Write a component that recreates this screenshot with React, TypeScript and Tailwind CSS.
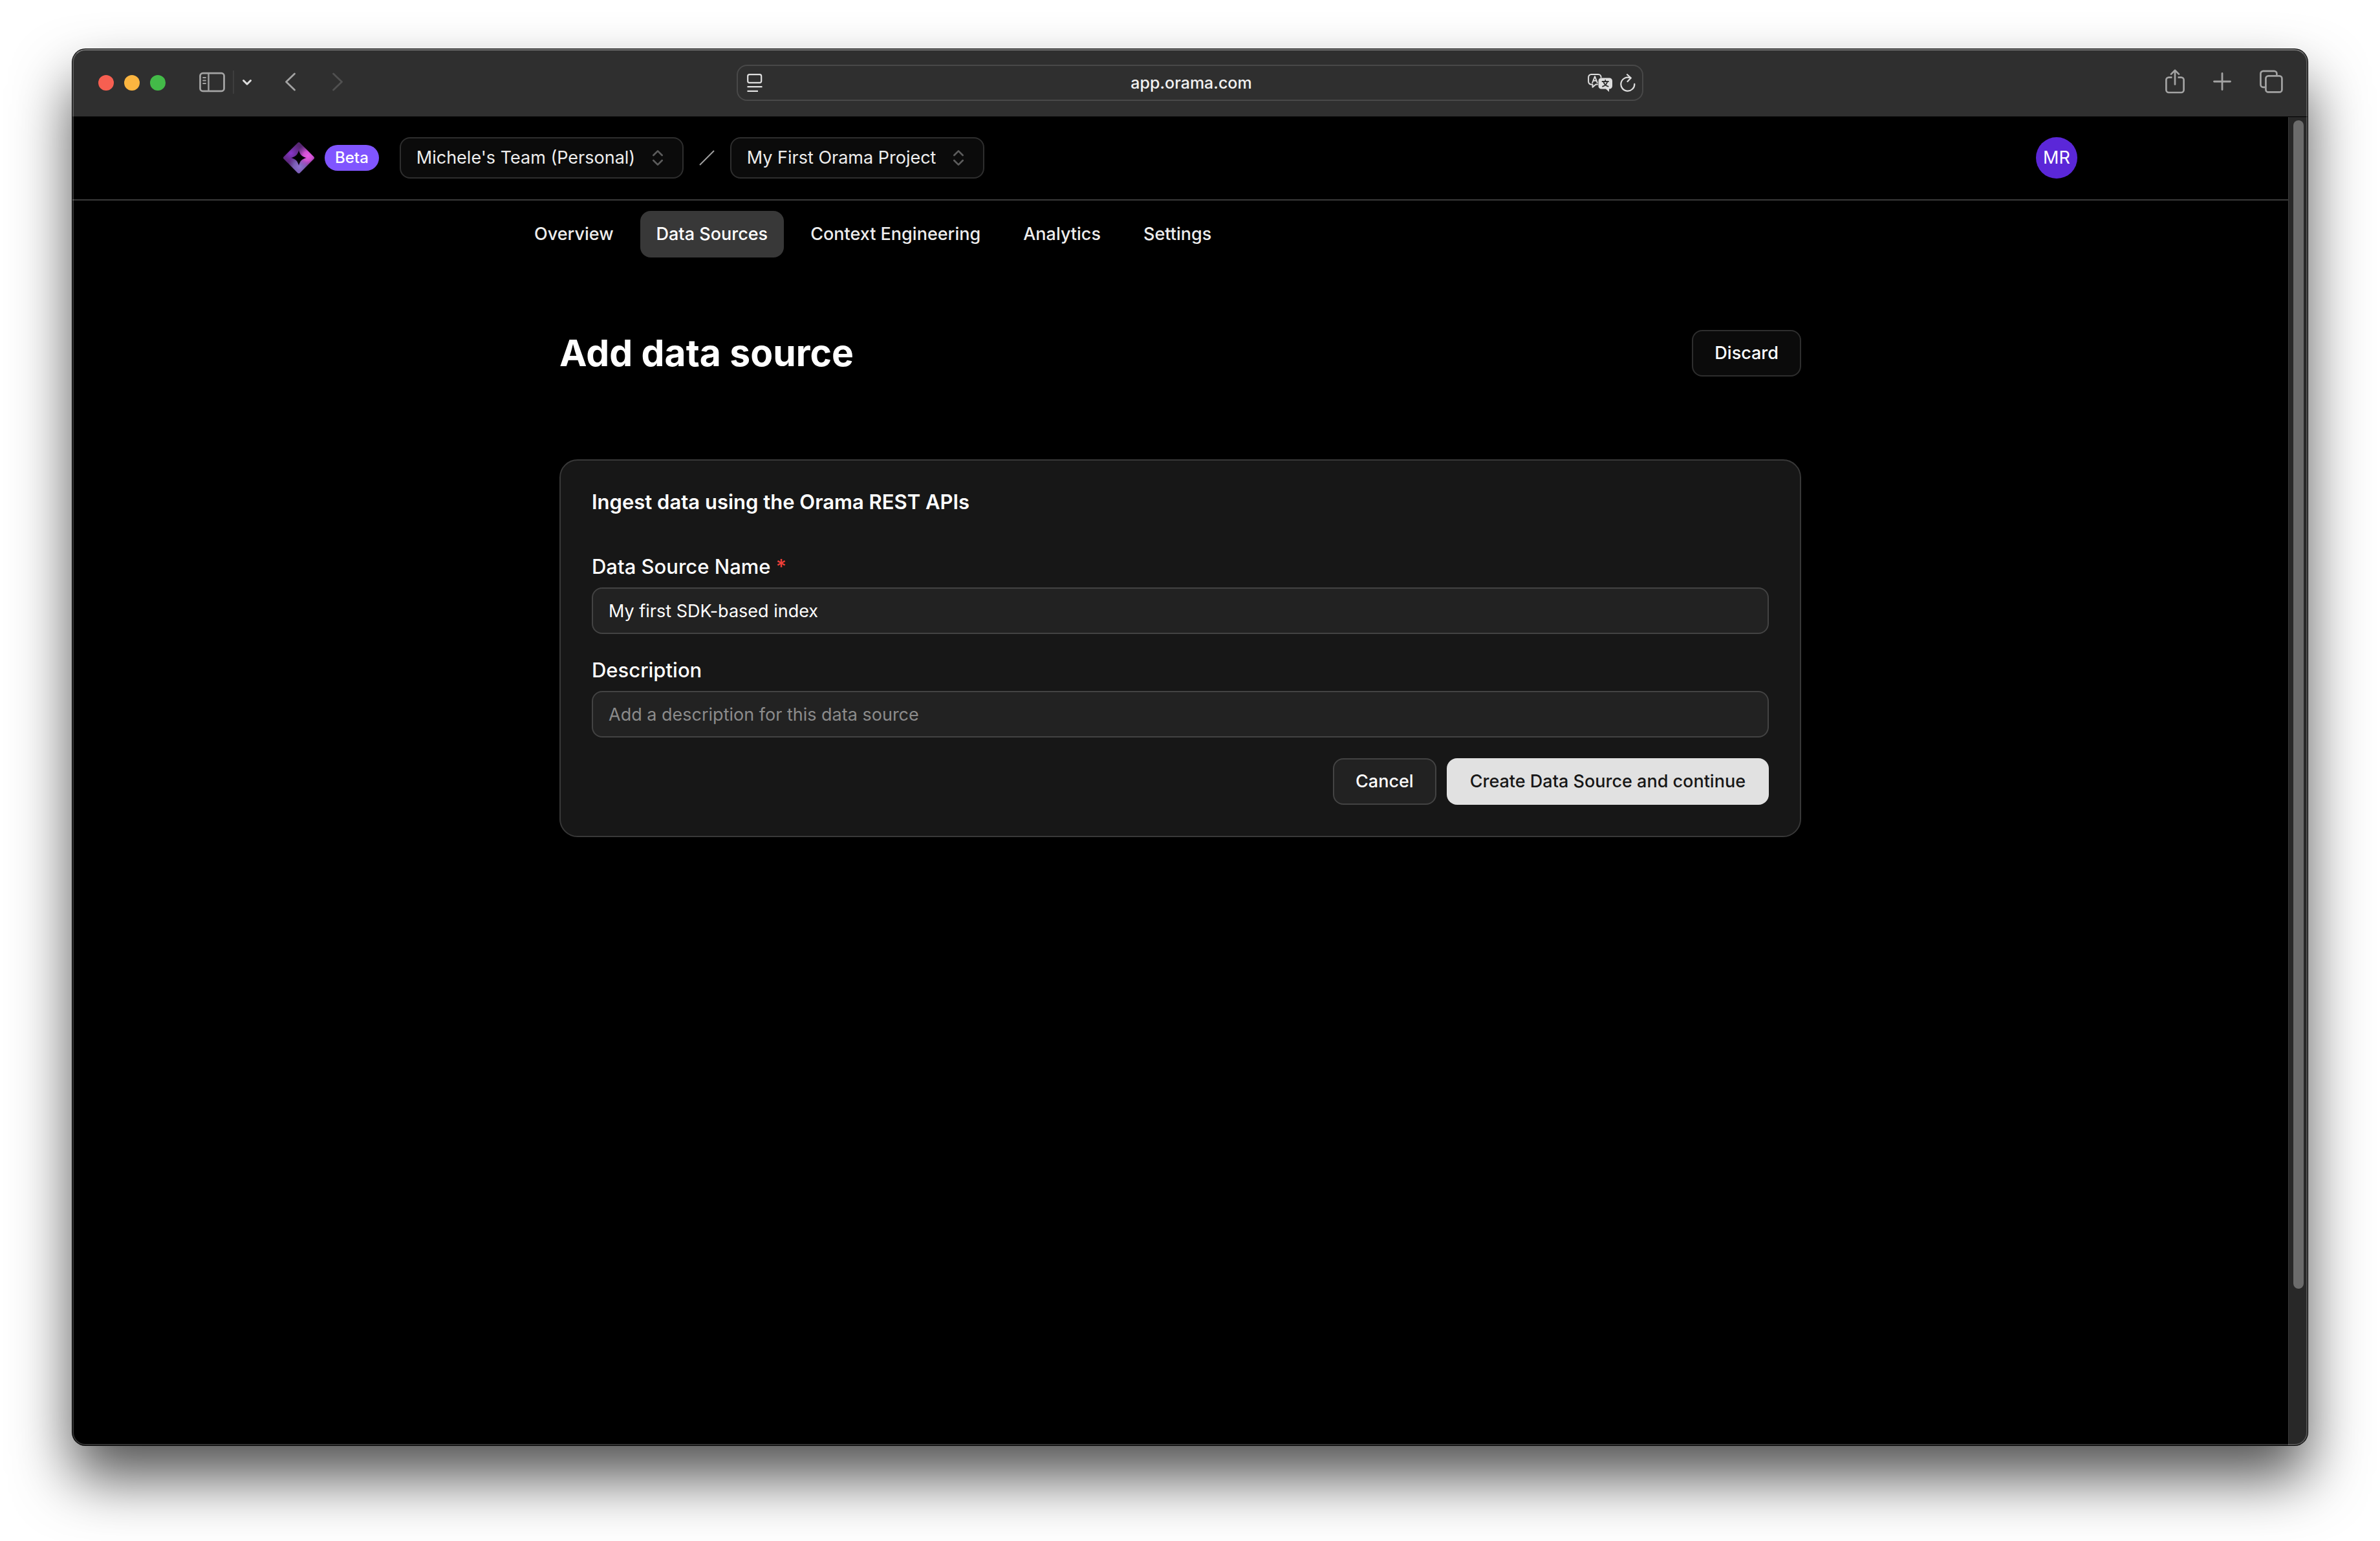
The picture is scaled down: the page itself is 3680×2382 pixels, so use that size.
import { useState, type ReactNode } from "react";
import { ChevronsUpDown } from "lucide-react";

function SidebarIcon() {
  return (
    <svg width="40" height="32" viewBox="0 0 40 32" fill="none" stroke="#a3a3a3" strokeLinecap="round">
      <rect x="1.5" y="2.2" width="37" height="27.6" rx="4" strokeWidth="2.8" />
      <path d="M14.5 2.5v27" strokeWidth="2.4" />
      <path d="M6 9h4M6 13.5h4M6 18h4" strokeWidth="1.8" />
    </svg>
  );
}

function ReaderIcon() {
  return (
    <svg width="24" height="28" viewBox="0 0 24 28" fill="none" stroke="#e0e0e0">
      <rect x="1.2" y="1.2" width="21" height="12.6" rx="2.6" strokeWidth="2.2" />
      <path d="M.5 20.2h23M.5 26.9h16.5" strokeWidth="2.2" />
    </svg>
  );
}

function TranslateIcon() {
  return (
    <svg width="38" height="28" viewBox="0 0 38 28" fill="none" strokeLinecap="round" strokeLinejoin="round">
      <path
        d="M15 16.5h-2.5L7.5 20.8v-4.3H5.5A4.4 4.4 0 0 1 1.1 12V5.4A4.4 4.4 0 0 1 5.5 1h10.7a4.4 4.4 0 0 1 4.4 4.4"
        stroke="#dedede"
        strokeWidth="2"
      />
      <path d="M7.2 13.8 11 4.2l3.8 9.6M8.5 10.8h5" stroke="#dedede" strokeWidth="1.9" />
      <path
        d="M21 6.5h12.5A4.5 4.5 0 0 1 38 11v8a4.5 4.5 0 0 1-4.5 4.5H33V28l-5-4.5h-7a4.5 4.5 0 0 1-4.5-4.5v-8A4.5 4.5 0 0 1 21 6.5Z"
        fill="#dedede"
      />
      <path
        d="M22.5 12H32M27.2 9.8V12M30.4 12c-1 4-3.7 6.5-7.4 7.7M24.2 12c1 4 3.7 6.5 7.4 7.7"
        stroke="#2f2f2f"
        strokeWidth="1.8"
      />
    </svg>
  );
}

function ReloadIcon() {
  return (
    <svg width="24" height="28" viewBox="0 0 24 28" fill="none" stroke="#dedede" strokeWidth="2.2" strokeLinecap="round" strokeLinejoin="round">
      <path d="M22.3 15.8A10.5 10.5 0 1 1 15.5 6.3" />
      <path d="m11 1.2 5.8 5.3-5.3 5.5" />
    </svg>
  );
}

function ShareIcon() {
  return (
    <svg width="30" height="38" viewBox="0 0 30 38" fill="none" stroke="#a3a3a3" strokeWidth="2.7" strokeLinecap="round" strokeLinejoin="round">
      <path
        d="M10.5 12.6H5.4a4 4 0 0 0-4 4V32a4 4 0 0 0 4 4h19.2a4 4 0 0 0 4-4V16.6a4 4 0 0 0-4-4h-5.1"
        strokeLinecap="butt"
      />
      <path d="M15 23.5V2.2M9 7.6l6-6 6 6" />
    </svg>
  );
}

function PlusIcon() {
  return (
    <svg width="28" height="28" viewBox="0 0 28 28" fill="none" stroke="#a3a3a3" strokeWidth="2.8" strokeLinecap="round">
      <path d="M14 1.5v25M1.5 14h25" />
    </svg>
  );
}

function TabsIcon() {
  return (
    <svg width="36" height="36" viewBox="0 0 36 36" fill="none" stroke="#a3a3a3" strokeWidth="2.7">
      <rect x="9.4" y="9.4" width="25" height="25" rx="4" />
      <path d="M8.5 26.8H5.4a4 4 0 0 1-4-4V5.9a4 4 0 0 1 4-4h17a4 4 0 0 1 4 4v2.6" />
    </svg>
  );
}

function OramaLogo() {
  return (
    <svg width="48" height="48" viewBox="0 0 48 48" role="img" aria-label="Orama">
      <defs>
        <clipPath id="logo-shape">
          <path
            clipRule="evenodd"
            d="M22.5.6a2.2 2.2 0 0 1 3 0L47.4 22.5a2.2 2.2 0 0 1 0 3L25.5 47.4a2.2 2.2 0 0 1-3 0L.6 25.5a2.2 2.2 0 0 1 0-3ZM24 12c-1.8 7-5 10.2-12 12 7 1.8 10.2 5 12 12 1.8-7 5-10.2 12-12-7-1.8-10.2-5-12-12Z"
          />
        </clipPath>
        <radialGradient id="logo-pink" gradientUnits="userSpaceOnUse" cx="38" cy="21" r="18">
          <stop offset="0" stopColor="#ea5ae6" />
          <stop offset=".4" stopColor="#dc55dc" stopOpacity=".9" />
          <stop offset="1" stopColor="#b048c4" stopOpacity="0" />
        </radialGradient>
        <radialGradient id="logo-violet" gradientUnits="userSpaceOnUse" cx="12" cy="17" r="17">
          <stop offset="0" stopColor="#8a35cc" />
          <stop offset="1" stopColor="#7a33b4" stopOpacity="0" />
        </radialGradient>
        <radialGradient id="logo-lilac" gradientUnits="userSpaceOnUse" cx="25" cy="38" r="18">
          <stop offset="0" stopColor="#8f72d0" />
          <stop offset=".5" stopColor="#8068c0" stopOpacity=".85" />
          <stop offset="1" stopColor="#7e66bd" stopOpacity="0" />
        </radialGradient>
      </defs>
      <g clipPath="url(#logo-shape)">
        <path d="M0 0h48v48H0z" fill="#552671" />
        <path d="M0 0h48v48H0z" fill="url(#logo-violet)" />
        <path d="M0 0h48v48H0z" fill="url(#logo-lilac)" />
        <path d="M0 0h48v48H0z" fill="url(#logo-pink)" />
      </g>
    </svg>
  );
}

function ToolbarButton({ label, children, disabled }: { label: string; children: ReactNode; disabled?: boolean }) {
  return (
    <button type="button" aria-label={label} disabled={disabled} className="flex shrink-0 items-center justify-center">
      {children}
    </button>
  );
}

function BrowserToolbar() {
  return (
    <div className="grid h-[104px] shrink-0 grid-cols-[1fr_1402px_1fr] items-center bg-[#2f2f2f]">
      <div className="flex items-center pl-10">
        <div className="flex gap-4">
          <button type="button" aria-label="Close window" className="size-6 rounded-full bg-[#f65f51]" />
          <button type="button" aria-label="Minimize window" className="size-6 rounded-full bg-[#fbb540]" />
          <button type="button" aria-label="Zoom window" className="size-6 rounded-full bg-[#43bb48]" />
        </div>
        <div className="ml-13 flex items-center pb-0.5">
          <ToolbarButton label="Show sidebar">
            <SidebarIcon />
          </ToolbarButton>
          <span className="ml-3 h-9 w-0.5 bg-[#3d3d3d]" />
          <span className="ml-3">
            <ToolbarButton label="Tab groups">
              <svg width="16" height="12" viewBox="0 0 16 12" fill="none" stroke="#dedede" strokeWidth="3" strokeLinecap="round" strokeLinejoin="round">
                <path d="M2.5 3.5 8 9l5.5-5.5" />
              </svg>
            </ToolbarButton>
          </span>
          <span className="ml-12">
            <ToolbarButton label="Back">
              <svg width="20" height="30" viewBox="0 0 20 30" fill="none" stroke="#a3a3a3" strokeWidth="2.8" strokeLinecap="round" strokeLinejoin="round">
                <path d="M17.5 2 4.5 14.5l13 12.5" />
              </svg>
            </ToolbarButton>
          </span>
          <span className="ml-14">
            <ToolbarButton label="Forward" disabled>
              <svg width="18" height="30" viewBox="0 0 18 30" fill="none" stroke="#505050" strokeWidth="2.8" strokeLinecap="round" strokeLinejoin="round">
                <path d="m1.5 2 13 12.5-13 12.5" />
              </svg>
            </ToolbarButton>
          </span>
        </div>
      </div>

      <div className="flex h-14 items-center rounded-2xl border-2 border-[#484848] pr-2.5 pl-3.5">
        <span className="flex w-20 items-center">
          <ToolbarButton label="Page menu">
            <ReaderIcon />
          </ToolbarButton>
        </span>
        <input
          aria-label="Address"
          defaultValue="app.orama.com"
          className="min-w-0 flex-1 bg-transparent text-center text-[25px] leading-8 font-medium text-[#f2f2f2] outline-none"
        />
        <span className="flex w-20 items-center justify-end gap-3">
          <ToolbarButton label="Translate page">
            <TranslateIcon />
          </ToolbarButton>
          <ToolbarButton label="Reload page">
            <ReloadIcon />
          </ToolbarButton>
        </span>
      </div>

      <div className="flex items-center justify-end gap-11 pr-9.5 pb-1">
        <ToolbarButton label="Share">
          <ShareIcon />
        </ToolbarButton>
        <ToolbarButton label="New tab">
          <PlusIcon />
        </ToolbarButton>
        <ToolbarButton label="Tab overview">
          <TabsIcon />
        </ToolbarButton>
      </div>
    </div>
  );
}

function Picker({ label, value }: { label: string; value: string }) {
  return (
    <div className="relative flex items-center">
      <select
        aria-label={label}
        defaultValue={value}
        className="h-16 appearance-none rounded-2xl border-2 border-[#2e2e2e] bg-[#0b0b0b] pr-18 pl-6 text-[27px] leading-8 text-[#ededed]"
      >
        <option>{value}</option>
      </select>
      <ChevronsUpDown size={32} className="pointer-events-none absolute right-6 text-[#5c5c5c]" />
    </div>
  );
}

const tabs = ["Overview", "Data Sources", "Context Engineering", "Analytics", "Settings"];

function AppHeader() {
  return (
    <header className="border-b-2 border-[#3a3a3a]">
      <div className="mx-auto flex h-32 max-w-[2774px] items-center">
        <OramaLogo />
        <span className="ml-4 flex h-10 items-center rounded-full bg-[#8055ff] px-4 text-2xl leading-8 font-medium text-white">
          Beta
        </span>
        <div className="ml-8 flex items-center gap-6">
          <Picker label="Team" value="Michele's Team (Personal)" />
          <svg width="24" height="24" viewBox="0 0 24 24" fill="none" stroke="#a0a0a0" strokeWidth="2">
            <path d="M23 1 1 23" />
          </svg>
          <Picker label="Project" value="My First Orama Project" />
        </div>
        <button
          type="button"
          aria-label="Account"
          className="ml-auto size-16 rounded-full bg-[#5b27d8] text-[27px] leading-8 text-white"
        >
          MR
        </button>
      </div>
    </header>
  );
}

function TextField({
  id,
  label,
  required,
  placeholder,
  value,
  onChange,
}: {
  id: string;
  label: string;
  required?: boolean;
  placeholder?: string;
  value: string;
  onChange: (value: string) => void;
}) {
  return (
    <div className="flex flex-col gap-4">
      <label htmlFor={id} className="text-[31px] leading-8 font-medium text-white">
        {label}
        {required && <span className="text-[#f0403a]"> *</span>}
      </label>
      <input
        id={id}
        required={required}
        placeholder={placeholder}
        value={value}
        onChange={(event) => onChange(event.target.value)}
        className="h-18 rounded-2xl border-2 border-[#434343] bg-[#222222] px-6 text-[27px] leading-8 text-white outline-none placeholder:text-[#8b8b8b] placeholder:opacity-100"
      />
    </div>
  );
}

export default function App() {
  const [name, setName] = useState("My first SDK-based index");
  const [description, setDescription] = useState("");

  return (
    <div className="flex min-h-screen flex-col bg-white px-28 pt-19 pb-37 font-['Inter',sans-serif]">
      <div className="relative flex flex-1 flex-col overflow-hidden rounded-[20px] bg-black shadow-[0_0_0_1px_#000,0_50px_90px_rgba(0,0,0,0.68)]">
        <BrowserToolbar />
        <div className="flex flex-1">
          <div className="min-w-0 flex-1">
            <AppHeader />
            <div className="mx-auto max-w-[2048px]">
              <nav className="flex gap-4 pt-4">
                {tabs.map((tab) => (
                  <a
                    key={tab}
                    href="#"
                    aria-current={tab === "Data Sources" ? "page" : undefined}
                    className="flex h-18 items-center rounded-2xl px-[25px] text-[27px] leading-8 font-medium text-[#ededed] aria-[current=page]:bg-[#383838] aria-[current=page]:text-white"
                  >
                    {tab}
                  </a>
                ))}
              </nav>
              <main className="px-16 pt-28">
                <div className="flex items-center justify-between">
                  <h1 className="text-[57px] leading-18 font-bold text-white">Add data source</h1>
                  <button
                    type="button"
                    className="h-18 rounded-2xl border-2 border-[#2e2e2e] bg-[#0b0b0b] px-[33px] text-[27px] leading-8 font-medium text-white"
                  >
                    Discard
                  </button>
                </div>
                <form
                  className="mt-32 rounded-[28px] border-2 border-[#383838] bg-[#171717] p-12"
                  onSubmit={(event) => event.preventDefault()}
                >
                  <h2 className="text-[31px] leading-8 font-semibold text-white">
                    Ingest data using the Orama REST APIs
                  </h2>
                  <div className="mt-17 flex flex-col gap-10">
                    <TextField id="name" label="Data Source Name" required value={name} onChange={setName} />
                    <TextField
                      id="description"
                      label="Description"
                      placeholder="Add a description for this data source"
                      value={description}
                      onChange={setDescription}
                    />
                  </div>
                  <div className="mt-8 flex justify-end gap-4">
                    <button
                      type="button"
                      className="h-18 rounded-2xl border-2 border-[#434343] bg-[#222222] px-[33px] text-[27px] leading-8 font-medium text-white"
                    >
                      Cancel
                    </button>
                    <button
                      type="submit"
                      className="h-18 rounded-2xl bg-[#e1e1e1] px-9 text-[27px] leading-8 font-medium text-[#171717]"
                    >
                      Create Data Source and continue
                    </button>
                  </div>
                </form>
              </main>
            </div>
          </div>
          <div className="mt-px w-[30px] border-l border-[#3a3a3a] bg-[#282828] pt-[5px] pl-[7px]">
            <div className="h-[88.2%] w-4 rounded-full bg-[#6b6b6b]" />
          </div>
        </div>
        <div className="pointer-events-none absolute inset-0 rounded-[20px] border-2 border-white/20 border-t-white/35" />
      </div>
    </div>
  );
}
